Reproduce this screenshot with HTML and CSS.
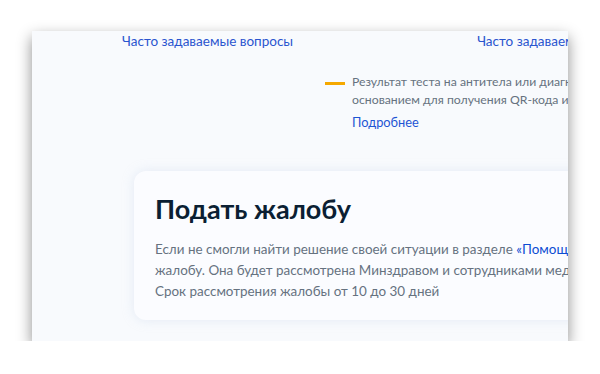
FILE: index.html
```html
<!DOCTYPE html>
<html>
<head>
	<title>Жалоба</title>
	<link rel="stylesheet" href="styles.css">
</head>
<body>
	<div class="frame">
		<div class="page">
			<div class="topLinks">
				<a class="topLink" href="#">Часто задаваемые вопросы</a>
				<a class="topLink" href="#">Часто задаваемые вопросы</a>
			</div>

			<div class="notice">
				<span class="dash"></span>
				<div class="noticeBody">
					<p class="noticeText">Результат теста на антитела или диагностика не являются<br>основанием для получения QR-кода или сертификата</p>
					<a class="more" href="#">Подробнее</a>
				</div>
			</div>

			<div class="card">
				<h1>Подать жалобу</h1>
				<p class="cardText">Если не смогли найти решение своей ситуации в разделе <a href="#">«Помощь»</a>, оставьте<br>жалобу. Она будет рассмотрена Минздравом и сотрудниками медицинских организаций<br>Срок рассмотрения жалобы от 10 до 30 дней</p>
			</div>
		</div>
	</div>
</body>
</html>
```

FILE: styles.css
```css
*{
	margin: 0;
	padding: 0;
	box-sizing: border-box;
}

body{
	background-color: #ffffff;
	font: normal 14px Lato, "Open Sans", sans-serif;
}

.frame{
	width: 536px;
	height: 310px;
	margin: 31px 0 0 32px;
	overflow: hidden;
	background-color: #f8fafd;
	box-shadow: 0 6px 14px rgba(0, 0, 0, 0.45);
}

.page{
	width: 900px;
}

.topLinks{
	display: flex;
	gap: 184px;
	padding: 2px 0 0 90px;
	height: 42px;
}

.topLink{
	font-size: 13.5px;
	color: #2a55cf;
	text-decoration: none;
}

.notice{
	display: flex;
	gap: 7px;
	margin-left: 293px;
	height: 98px;
}

.dash{
	width: 20px;
	height: 3px;
	margin-top: 9px;
	background-color: #f5a800;
}

.noticeText{
	font-size: 12.25px;
	line-height: 18px;
	color: #66727f;
}

.more{
	display: block;
	margin-top: 5px;
	font-size: 12.8px;
	color: #1e55d4;
	text-decoration: none;
}

.card{
	margin-left: 102px;
	padding: 20px 21px 18px;
	border-radius: 12px;
	background-color: #fbfcff;
	box-shadow: 0 0 12px rgba(190, 205, 230, 0.35);
}

.card h1{
	font-size: 27px;
	font-weight: bold;
	line-height: 36px;
	color: #0b1f33;
	margin-bottom: 12px;
}

.cardText{
	font-size: 13.45px;
	line-height: 21px;
	color: #66727f;
}

.cardText a{
	color: #0d4cd3;
	text-decoration: none;
}
```
